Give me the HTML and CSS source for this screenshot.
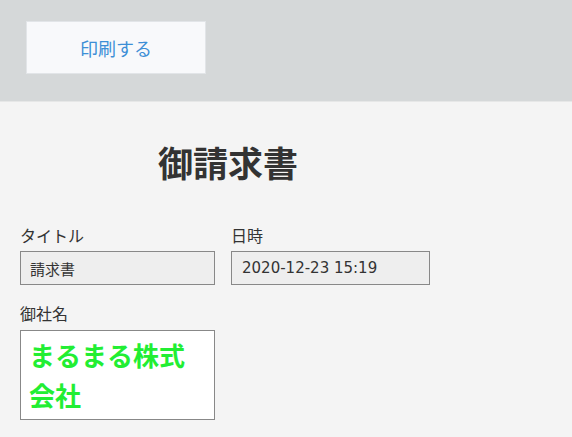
FILE: index.html
```html
<!DOCTYPE html>
<html lang="ja">
<head>
    <meta charset="UTF-8">
    <meta name="viewport" content="width=device-width, initial-scale=1.0">
    <title>御請求書</title>
    <link rel="stylesheet" href="styles.css">
</head>
<body>
    <div class="toolbar">
        <button class="print-btn">印刷する</button>
    </div>

    <div class="sheet">
        <h1>御請求書</h1>

        <div class="row">
            <div class="form-group">
                <label for="title">タイトル</label>
                <input type="text" id="title" value="請求書" readonly>
            </div>
            <div class="form-group date">
                <label for="date">日時</label>
                <input type="text" id="date" value="2020-12-23 15:19" readonly>
            </div>
        </div>

        <div class="form-group">
            <label>御社名</label>
            <div class="company">まるまる株式会社</div>
        </div>
    </div>
</body>
</html>
```

FILE: styles.css
```css
body {
    font-family: "Noto Sans CJK JP", sans-serif;
    background-color: #f4f4f4;
    color: #333;
    margin: 0;
    padding: 0;
}
.toolbar {
    height: 102px;
    background-color: #d5d8d9;
    border-bottom: 1px solid #e6e7e7;
    padding: 21px 0 0 26px;
    box-sizing: border-box;
}
.print-btn {
    width: 180px;
    height: 53px;
    background-color: #f8f9fb;
    border: 1px solid #e2e5e8;
    color: #3d8fd6;
    font-family: "Noto Sans CJK JP", sans-serif;
    font-size: 18px;
    font-weight: normal;
    padding: 0;
    cursor: pointer;
}
.sheet {
    padding: 40px 20px 0;
}
h1 {
    width: 416px;
    margin: 0;
    text-align: center;
    font-size: 35px;
    line-height: 40px;
    font-weight: bold;
    color: #333;
}
.row {
    display: flex;
    gap: 16px;
    margin-top: 43px;
}
.form-group {
    margin-bottom: 18px;
}
.form-group label {
    display: block;
    font-size: 16px;
    line-height: 20px;
    margin-bottom: 6px;
}
.form-group input {
    width: 195px;
    height: 34px;
    box-sizing: border-box;
    padding: 0 9px;
    border: 1px solid #888;
    background-color: #eee;
    color: #333;
    font-family: "DejaVu Sans", "Noto Sans CJK JP", sans-serif;
    font-size: 15px;
    outline: none;
}
.date input {
    width: 199px;
    padding: 0 10px;
}
.company {
    width: 195px;
    height: 90px;
    box-sizing: border-box;
    padding: 4px 8px;
    border: 1px solid #888;
    background-color: #fff;
    color: #22ee33;
    font-size: 26px;
    line-height: 40px;
    font-weight: bold;
    margin-top: 7px;
}
```
